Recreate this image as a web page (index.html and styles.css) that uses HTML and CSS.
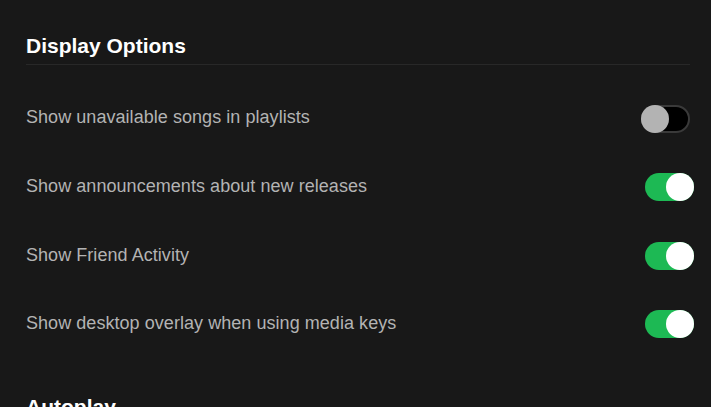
FILE: index.html
```html
<!DOCTYPE html>
<html lang="en">
<head>
<meta charset="utf-8">
<title>Display Options</title>
<link rel="stylesheet" href="styles.css">
</head>
<body>
<main class="page">
  <section class="section">
    <h2 class="section-title">Display Options</h2>
    <div class="rows">
      <div class="row">
        <span class="label">Show unavailable songs in playlists</span>
        <span class="toggle toggle-off"><span class="knob"></span></span>
      </div>
      <div class="row">
        <span class="label">Show announcements about new releases</span>
        <span class="toggle toggle-on"><span class="knob"></span></span>
      </div>
      <div class="row">
        <span class="label">Show Friend Activity</span>
        <span class="toggle toggle-on"><span class="knob"></span></span>
      </div>
      <div class="row">
        <span class="label">Show desktop overlay when using media keys</span>
        <span class="toggle toggle-on"><span class="knob"></span></span>
      </div>
    </div>
  </section>
  <section class="section">
    <h2 class="section-title next">Autoplay</h2>
  </section>
</main>
</body>
</html>
```
FILE: styles.css
```css
html, body {
  margin: 0;
  padding: 0;
  background: #181818;
  height: 100%;
  overflow: hidden;
}

.page {
  padding: 0 17px 0 26px;
  font-family: "Liberation Sans", Arial, sans-serif;
}

.section-title {
  margin: 32px 4px 0 0;
  padding-bottom: 4px;
  border-bottom: 1px solid #282828;
  font-size: 21px;
  line-height: 28px;
  font-weight: 700;
  color: #ffffff;
}

.section-title.next {
  margin-top: 35px;
  border-bottom: none;
}

.rows {
  margin-top: 18px;
  display: flex;
  flex-direction: column;
}

.row {
  height: 68.67px;
  display: flex;
  align-items: center;
  justify-content: space-between;
}

.label {
  font-size: 18px;
  line-height: 24px;
  color: #b3b3b3;
  letter-spacing: 0.05px;
}

.toggle {
  box-sizing: border-box;
  width: 49px;
  height: 28px;
  border-radius: 14px;
  display: flex;
  align-items: center;
}

.toggle-off {
  background: #000000;
  border: 2px solid #3a3a3a;
  justify-content: flex-start;
  margin-right: 4px;
  margin-top: 4px;
}

.toggle-on {
  background: #1db954;
  justify-content: flex-end;
  margin-top: 2px;
}

.knob {
  width: 28px;
  height: 28px;
  border-radius: 50%;
  flex: none;
}

.toggle-off .knob {
  background: #b3b3b3;
  margin-left: -2px;
}

.toggle-on .knob {
  background: #ffffff;
}
```
